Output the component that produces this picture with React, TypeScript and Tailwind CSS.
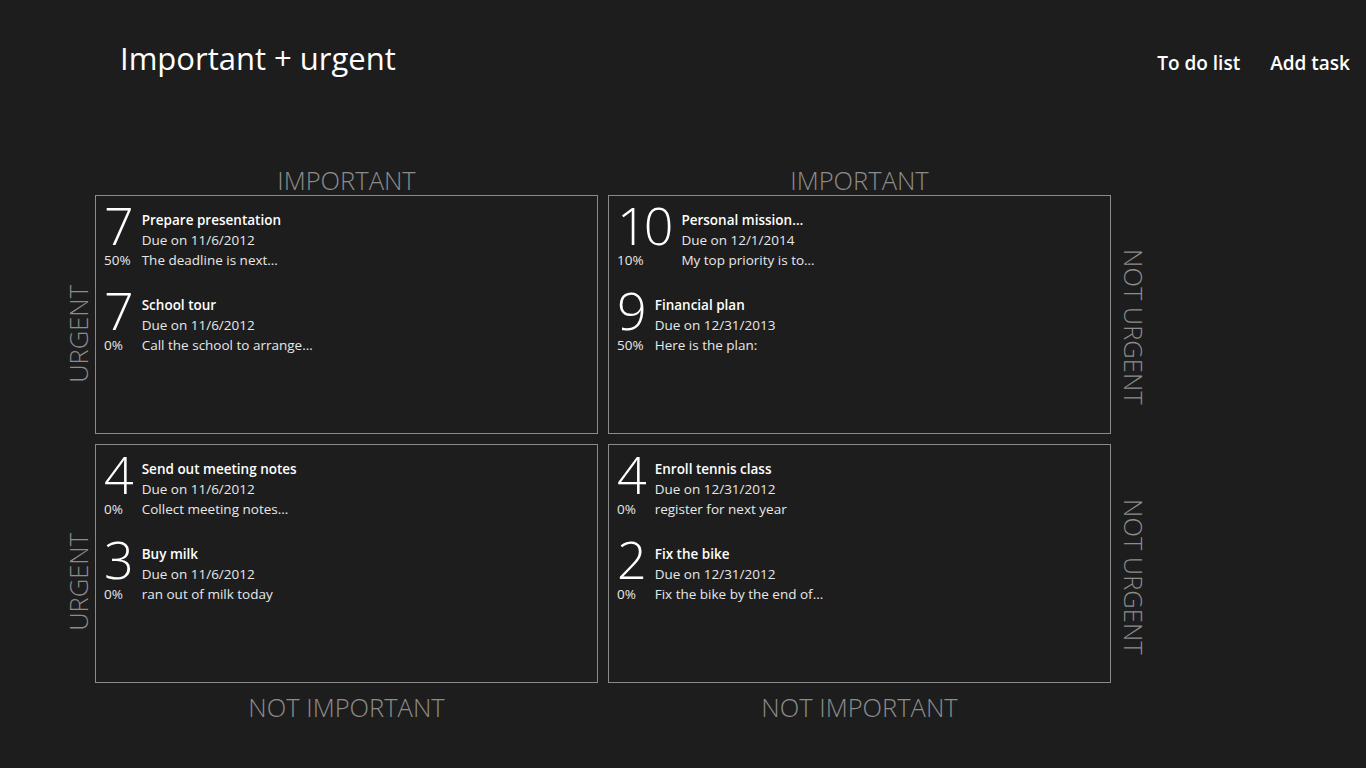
import React from "react";

type Task = {
  score: number;
  title: string;
  due: string;
  done: string;
  note: string;
};

const quadrants: Task[][] = [
  [
    { score: 7, title: "Prepare presentation", due: "11/6/2012", done: "50%", note: "The deadline is next…" },
    { score: 7, title: "School tour", due: "11/6/2012", done: "0%", note: "Call the school to arrange…" },
  ],
  [
    { score: 10, title: "Personal mission…", due: "12/1/2014", done: "10%", note: "My top priority is to…" },
    { score: 9, title: "Financial plan", due: "12/31/2013", done: "50%", note: "Here is the plan:" },
  ],
  [
    { score: 4, title: "Send out meeting notes", due: "11/6/2012", done: "0%", note: "Collect meeting notes…" },
    { score: 3, title: "Buy milk", due: "11/6/2012", done: "0%", note: "ran out of milk today" },
  ],
  [
    { score: 4, title: "Enroll tennis class", due: "12/31/2012", done: "0%", note: "register for next year" },
    { score: 2, title: "Fix the bike", due: "12/31/2012", done: "0%", note: "Fix the bike by the end of…" },
  ],
];

function TaskRow({ task }: { task: Task }) {
  return (
    <div className="flex gap-[11px]">
      <div className="flex flex-col">
        <div className="h-[40px] -mt-[5px] mb-[5px] overflow-visible">
          <span className="block font-light text-[52px] leading-[40px] tracking-[-3px] text-white">
            {task.score}
          </span>
        </div>
        <span className="text-[13.5px] leading-[20px] text-[#e8e8e8]">{task.done}</span>
      </div>
      <div className="flex flex-col text-[13.5px] leading-[20px] text-[#e8e8e8]">
        <span className="font-semibold text-white">{task.title}</span>
        <span>Due on {task.due}</span>
        <span>{task.note}</span>
      </div>
    </div>
  );
}

function Quadrant({ tasks }: { tasks: Task[] }) {
  return (
    <div className="border border-[#8a8a8a] h-[239px] pt-[14px] pl-[8px] flex flex-col gap-[25px]">
      {tasks.map((t, i) => (
        <TaskRow key={i} task={t} />
      ))}
    </div>
  );
}

const axis = "text-[#8c8c8c] font-light text-[25.5px] leading-[30px]";

export default function App() {
  return (
    <div
      className="min-h-screen w-full bg-[#1d1d1d] text-white"
      style={{ fontFamily: '"Open Sans", "Noto Sans", sans-serif' }}
    >
      {/* entête */}
      <div className="flex items-baseline justify-between pl-[120px] pr-[16px] pt-[38px]">
        <h1 className="text-[31px] leading-[40px] font-normal">Important + urgent</h1>
        <div className="flex gap-[30px] text-[19px] font-semibold">
          <span>To do list</span>
          <span>Add task</span>
        </div>
      </div>

      {/* matrice */}
      <div className="mt-[87px] ml-[60px] grid grid-cols-[35px_503px_10px_503px_46px] grid-rows-[30px_239px_10px_239px_auto]">
        <div />
        <div className={`${axis} text-center`}>IMPORTANT</div>
        <div />
        <div className={`${axis} text-center`}>IMPORTANT</div>
        <div />

        <div className="flex items-center justify-center pt-[38px]">
          <span className={`${axis} [writing-mode:vertical-rl] rotate-180`}>URGENT</span>
        </div>
        <Quadrant tasks={quadrants[0]} />
        <div />
        <Quadrant tasks={quadrants[1]} />
        <div className="flex items-center justify-center pt-[24px]">
          <span className={`${axis} [writing-mode:vertical-rl]`}>NOT URGENT</span>
        </div>

        <div className="col-span-5" />

        <div className="flex items-center justify-center pt-[36px]">
          <span className={`${axis} [writing-mode:vertical-rl] rotate-180`}>URGENT</span>
        </div>
        <Quadrant tasks={quadrants[2]} />
        <div />
        <Quadrant tasks={quadrants[3]} />
        <div className="flex items-center justify-center pt-[26px]">
          <span className={`${axis} [writing-mode:vertical-rl]`}>NOT URGENT</span>
        </div>

        <div />
        <div className={`${axis} text-center pt-[9px]`}>NOT IMPORTANT</div>
        <div />
        <div className={`${axis} text-center pt-[9px]`}>NOT IMPORTANT</div>
        <div />
      </div>
    </div>
  );
}
